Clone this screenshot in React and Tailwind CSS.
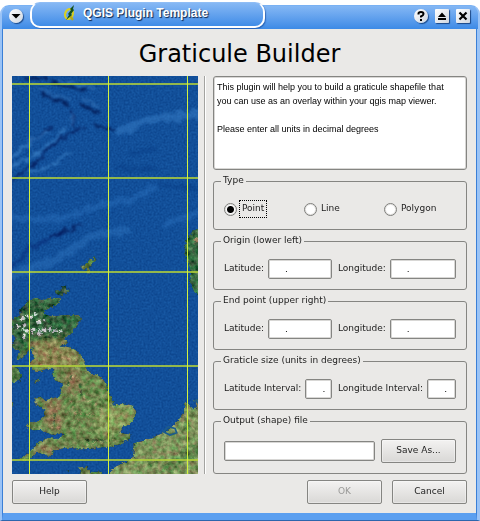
import React from 'react';

const BUTTON =
  'h-6 w-[75px] shrink-0 rounded-[2px] border border-[#858582] bg-gradient-to-b from-[#f3f2f1] to-[#d9d8d6] pb-[2px] text-center text-[9px] leading-3 text-[#1c1c1c] shadow-[inset_0_0_0_1px_rgba(255,255,255,0.35)] disabled:text-[#9a9a98]';
const FIELD =
  'h-5 min-w-0 flex-1 rounded-[2px] border border-[#858582] bg-white pl-4 text-[9px] leading-3 text-black shadow-[inset_0_0_0_1px_#d8d7d5] outline-none';

function Group({ title, children }) {
  return (
    <fieldset className="min-w-0 rounded-[3px] border border-[#858582] px-[7px] pb-[10px]">
      <legend className="px-[2px] pb-[2px] text-[9px] leading-[10px]">{title}</legend>
      <div className="px-[3px] pt-3">{children}</div>
    </fieldset>
  );
}

function NumberField({ id, label }) {
  return (
    <div className="flex min-w-0 items-center gap-[4px]">
      <label htmlFor={id} className="shrink-0 whitespace-nowrap pb-[2px]">{label}</label>
      <input id={id} type="text" defaultValue="." className={FIELD} />
    </div>
  );
}

function NumberPair({ id, first, second }) {
  return (
    <div className="grid grid-cols-[108fr_118fr] gap-[6px]">
      <NumberField id={id + '-lat'} label={first} />
      <NumberField id={id + '-lon'} label={second} />
    </div>
  );
}

function TypeOption({ label, checked }) {
  return (
    <label className="flex h-5 items-center gap-[2px]">
      <input
        type="radio"
        name="type"
        defaultChecked={checked}
        className="h-[13px] w-[13px] shrink-0 appearance-none rounded-full border border-[#7d7d7a] bg-white shadow-[inset_0_0_0_1px_#e4e3e1] checked:bg-[radial-gradient(circle,#000_0_3px,#fff_4px)]"
      />
      <span className={checked ? 'border border-dotted border-black px-[2px] pb-[3px] pt-[1px]' : 'px-[2px] pb-[4px] pt-[2px]'}>
        {label}
      </span>
    </label>
  );
}

function MapPicture() {
  return (
    <svg viewBox="0 0 186 398" preserveAspectRatio="xMidYMid slice" className="h-[398px] w-[186px] shrink-0" role="img" aria-label="Map of Great Britain">
      <defs>
        <filter id="sea" x="0" y="0" width="100%" height="100%" colorInterpolationFilters="sRGB">
          <feTurbulence type="fractalNoise" baseFrequency="0.5" numOctaves="2" seed="4" />
          <feColorMatrix values="0.08 0 0 0 0.03  0.14 0 0 0 0.24  0.16 0 0 0 0.52  0 0 0 0 1" />
        </filter>
        <filter id="ridge" x="-20%" y="-20%" width="140%" height="140%" colorInterpolationFilters="sRGB">
          <feTurbulence type="fractalNoise" baseFrequency="0.04" numOctaves="4" seed="8" result="n" />
          <feDisplacementMap in="SourceGraphic" in2="n" scale="32" xChannelSelector="R" yChannelSelector="G" />
          <feGaussianBlur stdDeviation="3" />
        </filter>
        <filter id="land" x="-5%" y="-5%" width="110%" height="110%" colorInterpolationFilters="sRGB">
          <feTurbulence type="fractalNoise" baseFrequency="0.12" numOctaves="2" seed="12" result="n" />
          <feDisplacementMap in="SourceGraphic" in2="n" scale="12" xChannelSelector="R" yChannelSelector="G" result="shape" />
          <feTurbulence type="fractalNoise" baseFrequency="0.07" numOctaves="3" seed="31" />
          <feColorMatrix values="0.9 0.5 0 0 -0.2  0.3 1 0 0 -0.15  0.5 0.6 0 0 -0.05  0 0 0 0 1" result="tone" />
          <feComposite in="shape" in2="tone" operator="arithmetic" k1="0" k2="1" k3="0.5" k4="-0.24" />
          <feComposite in2="shape" operator="in" />
        </filter>
        <filter id="soft" x="-20%" y="-20%" width="140%" height="140%">
          <feGaussianBlur stdDeviation="9" />
        </filter>
        <clipPath id="britain">
          <path d="M85 90L110 85 130 92 150 85 182 86 178 97 160 108 140 118 126 132 150 140 180 138 210 136 238 137 241 150 225 175 212 192 190 207 203 217 175 232 200 230 225 240 240 252 250 270 257 292 268 308 290 315 305 325 320 345 325 365 335 385 340 400 330 411 350 404 375 402 398 408 408 425 403 445 390 460 366 472 360 490 392 495 385 508 365 520 340 528 300 532 260 536 235 538 210 532 185 535 165 540 150 560 135 552 110 547 95 560 75 572 58 568 80 555 100 535 120 515 145 505 175 508 195 492 180 488 165 495 140 487 120 478 100 480 78 470 90 458 115 455 130 445 135 430 130 412 108 406 107 385 120 380 135 392 160 385 180 380 185 355 190 340 165 330 158 310 165 297 140 296 110 305 93 295 90 280 105 265 95 250 100 232 85 240 68 262 50 270 60 240 45 238 37 230 50 205 36 190 36 150 60 135 75 110Z" />
        </clipPath>
      </defs>
      <rect width="186" height="398" fill="#12509c" />
      <rect width="186" height="398" filter="url(#sea)" />
      <g transform="scale(0.333333) translate(-36 -18)" fill="none" strokeLinecap="round" filter="url(#ridge)">
        <path d="M36 330L95 285 180 210 250 170M95 215L150 175M215 120L225 180" stroke="#000f4e" strokeWidth="7" opacity="0.7" />
        <path d="M36 290L110 250 200 180M90 310L160 285 210 245M36 265L95 215 145 185" stroke="#3f86cb" strokeWidth="9" opacity="0.65" />
        <path d="M75 25L140 22M150 38L250 60M130 75L210 105M240 105L295 125M285 165L340 180" stroke="#00154f" strokeWidth="8" opacity="0.8" />
        <path d="M120 60L210 88M180 30L280 55M255 85L300 110M215 130L215 165" stroke="#3775ba" strokeWidth="6" opacity="0.65" />
        <path d="M360 185L430 155 500 140 620 130" stroke="#3b82cb" strokeWidth="26" opacity="0.45" />
        <path d="M26 440L130 450 210 440 300 405 400 390 460 350M500 460L614 425" stroke="#3179c6" strokeWidth="20" opacity="0.35" />
        <path d="M26 620L140 580 210 545 280 495 380 480" stroke="#377fc9" strokeWidth="26" opacity="0.35" />
        <path d="M26 600L90 535 180 490" stroke="#001a66" strokeWidth="12" opacity="0.4" />
        <path d="M150 503L190 485 245 463" stroke="#001250" strokeWidth="7" opacity="0.8" />
        <path d="M350 295L470 300M480 345L590 355M400 250L460 235" stroke="#063680" strokeWidth="12" opacity="0.4" />
      </g>
      <g transform="scale(0.333333) translate(-36 582)">
        <g filter="url(#land)">
          <path fill="#68834a" stroke="#68834a" strokeWidth="3" d="M85 90L110 85 130 92 150 85 182 86 178 97 160 108 140 118 126 132 150 140 180 138 210 136 238 137 241 150 225 175 212 192 190 207 203 217 175 232 200 230 225 240 240 252 250 270 257 292 268 308 290 315 305 325 320 345 325 365 335 385 340 400 330 411 350 404 375 402 398 408 408 425 403 445 390 460 366 472 360 490 392 495 385 508 365 520 340 528 300 532 260 536 235 538 210 532 185 535 165 540 150 560 135 552 110 547 95 560 75 572 58 568 80 555 100 535 120 515 145 505 175 508 195 492 180 488 165 495 140 487 120 478 100 480 78 470 90 458 115 455 130 445 135 430 130 412 108 406 107 385 120 380 135 392 160 385 180 380 185 355 190 340 165 330 158 310 165 297 140 296 110 305 93 295 90 280 105 265 95 250 100 232 85 240 68 262 50 270 60 240 45 238 37 230 50 205 36 190 36 150 60 135 75 110Z" />
          <g clipPath="url(#britain)">
            <g filter="url(#soft)">
              <path fill="#31603b" d="M26 70H190L250 130 240 180 190 200 120 205 36 270Z" />
              <path fill="#85804e" d="M95 210L190 210 240 260 230 290 95 295Z" />
              <path fill="#8a7650" d="M205 290L240 310 235 350 215 380 195 340ZM135 395L180 390 185 480 140 470ZM115 520L155 525 150 555 115 545Z" />
              <path fill="#829656" d="M340 405H408V470L300 500 280 430Z" />
            </g>
            <path stroke="#e3dbe6" strokeWidth="8" fill="none" opacity="0.8" strokeDasharray="14 8 5 6" d="M46 165L80 182 100 190M92 178L130 180 188 183M112 192L155 174M60 150L85 136M72 205L75 160M85 145L108 130M110 160L135 150" />
            <path stroke="#173b22" strokeWidth="7" fill="none" opacity="0.5" strokeDasharray="14 8" d="M120 165L180 155M115 205L200 195M240 340L245 380M160 105L100 110M215 315L200 350M165 430L160 470M255 510L330 512" />
            <path stroke="#c09c76" strokeWidth="6" fill="none" opacity="0.55" strokeDasharray="7 13" d="M105 250L230 270M120 285L230 290M215 320L235 330M150 405L180 420M150 470L185 475M250 380L310 420M220 430L340 440M130 535L155 540M260 522L350 510M210 390L240 460" />
          </g>
          <path fill="#48703c" d="M25 280L50 290 67 318 58 333 25 340ZM103 332L118 325 116 335 104 342ZM25 390L40 395 38 410 25 408Z" />
          <path fill="#7a9058" d="M610 385L582 390 592 412 575 415 553 392 551 430 530 455 510 475 490 488 460 500 430 512 400 520 400 562 385 572 350 588 330 600 328 630H610Z" />
          <path fill="#4d7a40" d="M480 590L530 565 550 530 600 520V560L540 580 510 610ZM555 440L580 480 550 475ZM440 570L480 575 450 590Z" opacity="0.6" />
          <path fill="#58733c" d="M236 592L262 590 268 605 306 605V620H245ZM198 602L208 601 205 607Z" />
          <path fill="#2c4f35" d="M165 62L185 58 188 45 197 48 200 60 210 58 206 68 190 70 188 78 175 75 166 70Z" />
          <path fill="#234a38" d="M55 120L75 105 80 115 60 128ZM40 165L50 160 52 175 40 180ZM38 215L48 210 45 225Z" />
        </g>
        <path d="M490 485L505 470 525 475 530 488 510 495ZM580 395L590 390 594 400" fill="none" stroke="#1c5b8c" strokeWidth="5" />
      </g>
      <g transform="scale(0.333333) translate(-36 -18)" filter="url(#land)">
        <path fill="#35683f" d="M610 472L578 482 562 505 552 535 562 575 572 600 568 630 582 665 600 680H610Z" />
        <path fill="#98795c" d="M580 507L600 502V518L582 516Z" />
        <path fill="#5a7838" d="M243 590L262 578 268 567 280 572 278 560 288 558 286 574 272 586 268 612 261 608 262 594 246 598Z" />
      </g>
      <g fill="#b4d238">
        <path fillOpacity="0.8" d="M0 7h186v2H0zM0 101h186v2H0zM0 195h186v2H0zM0 289h186v2H0zM0 383h186v2H0z" />
        <path fill="#d3f23e" d="M17 0h1v398h-1zM96 0h1v398h-1zM175 0h1v398h-1z" />
      </g>
    </svg>
  );
}

function TitleGlyph({ label, round, children }) {
  return (
    <button
      type="button"
      aria-label={label}
      className={
        'h-[14px] w-[14px] shrink-0 bg-gradient-to-br from-white to-[#cfd6df] shadow-[1px_1px_1px_rgba(10,50,110,0.8)] ' +
        (round ? 'rounded-full' : 'rounded-[1px]')
      }
    >
      <svg viewBox="0 0 14 14" className="h-[14px] w-[14px]">{children}</svg>
    </button>
  );
}

function TitleBar() {
  return (
    <header className="flex h-[29px] items-start">
      <div className="mt-[5px] flex h-6 w-full items-start rounded-t-[9px] border-x-2 border-t border-x-[#9ac3f6] border-t-[#79b1f3] bg-gradient-to-b from-[#84b7f4] to-[#3c8ae6] pl-[7px] pr-2">
        <div className="mt-[3px]">
          <TitleGlyph label="Window menu" round>
            <path d="M2.500 5h9L7 9.500z" fill="#000" />
          </TitleGlyph>
        </div>
        <div className="-mt-1 ml-[7px] flex h-[26px] w-[235px] items-center rounded-[10px] border-2 border-t border-white border-t-[#8fbdf5] bg-gradient-to-b from-[#86b8f4] to-[#3f8ce7] pb-[3px] pl-[31px] shadow-[1px_1px_1px_rgba(20,70,150,0.6)]">
          <svg viewBox="0 0 14 16" className="h-4 w-[14px] shrink-0">
            <ellipse cx="6" cy="9" rx="3.800" ry="5" fill="none" stroke="#d8cf20" strokeWidth="2.200" transform="rotate(18 6 9)" />
            <path d="M7 11l3 4" stroke="#b5a81a" strokeWidth="2.200" />
            <path d="M11 0L7 4l1 1-3 4 1 1-3 5 6-5-1-1 3-4-1-1z" fill="#14501c" />
          </svg>
          <span className="ml-[6px] whitespace-nowrap font-['Liberation_Sans',Arial,sans-serif] text-[12px] font-bold leading-4 text-white [text-shadow:1px_1px_1px_#0b2248]">
            QGIS Plugin Template
          </span>
        </div>
        <div className="ml-auto mt-[3px] flex gap-[7px]">
          <TitleGlyph label="Help on window" round>
            <path d="M4.500 5.500V4.500Q4.500 3 7 3t2.500 2Q9.500 6.300 7 7.500V8.500M7 10v2" fill="none" stroke="#000" strokeWidth="2" />
          </TitleGlyph>
          <TitleGlyph label="Shade">
            <path d="M3 8l4-4.500L11 8zM3 9h8v2H3z" fill="#000" />
          </TitleGlyph>
          <TitleGlyph label="Close">
            <path d="M3.500 3.500l7 7m0-7l-7 7" stroke="#000" strokeWidth="2.200" />
          </TitleGlyph>
        </div>
      </div>
    </header>
  );
}

export default function App() {
  return (
    <div className="min-h-screen bg-white font-['DejaVu_Sans',Verdana,sans-serif] text-[9px] leading-3 text-[#1c1c1c]">
      <div className="flex min-h-screen flex-col">
        <TitleBar />
        <div className="flex flex-1 flex-col border-x-2 border-b border-x-[#9ac3f6] border-b-[#2d66ad] bg-[#9ac3f6] pr-[1px]">
          <main className="flex-1 border-x border-b-[7px] border-x-[#3a7fd6] border-b-[#5b9ff0] bg-[#eae9e7] px-[9px] pb-[9px]">
            <h1 className="pb-[7px] pt-[11px] text-center text-[24px] leading-[29px] text-black">Graticule Builder</h1>
            <div className="flex gap-[6px]">
              <MapPicture />
              <div className="w-[2px] shrink-0 border-l border-[#a3a3a0] bg-white" />
              <div className="ml-[1px] flex min-w-0 flex-1 flex-col gap-[5px]">
                <textarea
                  readOnly
                  aria-label="Description"
                  className="block h-[94px] w-full resize-none rounded-[3px] border border-[#858582] bg-white py-[3px] pl-[3px] pr-4 font-['Liberation_Sans',Arial,sans-serif] text-[9px] leading-[14px] text-black shadow-[inset_0_0_0_1px_#d8d7d5] outline-none"
                  defaultValue={'This plugin will help you to build a graticule shapefile that you can use as an overlay within your qgis map viewer.\n\nPlease enter all units in decimal degrees'}
                />
                <Group title="Type">
                  <div className="grid grid-cols-[80fr_80fr_72fr]">
                    <TypeOption label="Point" checked />
                    <TypeOption label="Line" />
                    <TypeOption label="Polygon" />
                  </div>
                </Group>
                <Group title="Origin (lower left)">
                  <NumberPair id="origin" first="Latitude:" second="Longitude:" />
                </Group>
                <Group title="End point (upper right)">
                  <NumberPair id="end" first="Latitude:" second="Longitude:" />
                </Group>
                <Group title="Graticle size (units in degrees)">
                  <NumberPair id="size" first="Latitude Interval:" second="Longitude Interval:" />
                </Group>
                <Group title="Output (shape) file">
                  <div className="flex items-center gap-[6px]">
                    <input type="text" aria-label="Output (shape) file" className={FIELD} />
                    <button type="button" className={BUTTON}>Save As...</button>
                  </div>
                </Group>
              </div>
            </div>
            <div className="mt-[6px] flex gap-[10px]">
              <button type="button" className={BUTTON}>Help</button>
              <button type="button" disabled className={BUTTON + ' ml-auto'}>OK</button>
              <button type="button" className={BUTTON}>Cancel</button>
            </div>
          </main>
        </div>
      </div>
    </div>
  );
}
